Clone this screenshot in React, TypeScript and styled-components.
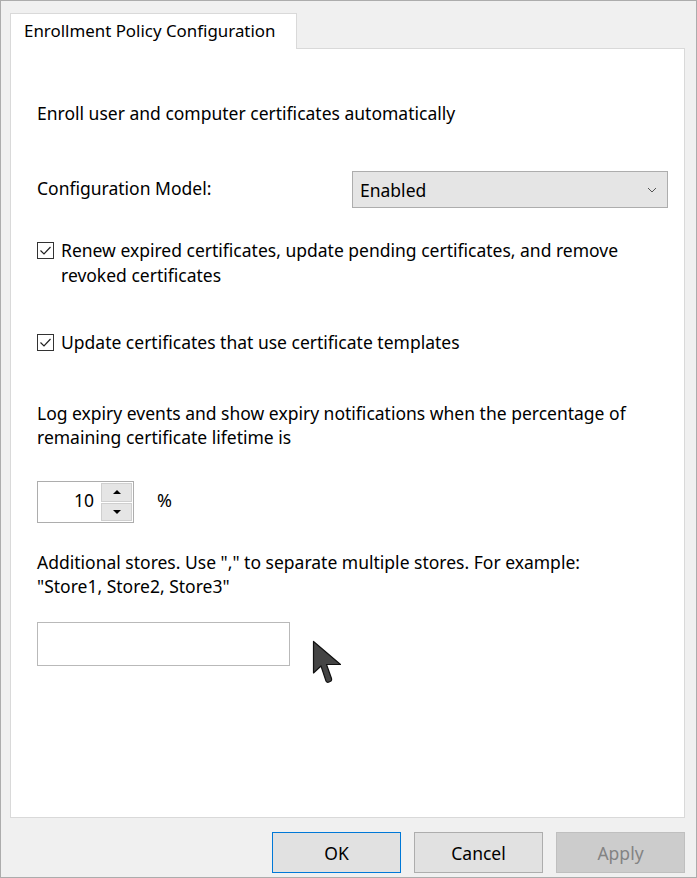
import React from "react";
import styled, { createGlobalStyle } from "styled-components";

const Global = createGlobalStyle`
  html, body { margin: 0; padding: 0; background: #f0f0f0; }
  body { font-family: "Segoe UI", "Noto Sans", "Open Sans", sans-serif; }
  * { box-sizing: border-box; }
`;

const Window = styled.div`
  position: relative;
  width: 697px;
  height: 878px;
  border: 1px solid #acacac;
  background: #f0f0f0;
  padding: 12px 11px 0 9px;
  display: flex;
  flex-direction: column;
  font-size: 17.5px;
  color: #000;
`;

const TabStrip = styled.div`
  display: flex;
  position: relative;
  z-index: 1;
  margin-bottom: -1px;
`;

const Tab = styled.div`
  width: 287px;
  height: 36px;
  background: #fff;
  border: 1px solid #d9d9d9;
  border-bottom: none;
  padding: 5px 0 0 13px;
  line-height: 24px;
  font-size: 16.9px;
  white-space: nowrap;
`;

const Panel = styled.div`
  width: 675px;
  height: 770px;
  background: #fff;
  border: 1px solid #d9d9d9;
  padding: 52px 0 0 26px;
  display: flex;
  flex-direction: column;
  align-items: flex-start;
`;

const Text = styled.div<{ $mt?: number; $lh?: number }>`
  margin-top: ${(p) => p.$mt ?? 0}px;
  line-height: ${(p) => p.$lh ?? 24}px;
  white-space: nowrap;
`;

const Row = styled.div<{ $mt: number }>`
  margin-top: ${(p) => p.$mt}px;
  display: flex;
  align-items: center;
  width: 100%;
`;

const Label = styled.div`
  width: 315px;
  line-height: 24px;
  margin-top: -4px;
`;

const Combo = styled.div`
  width: 316px;
  height: 37px;
  background: #e5e5e5;
  border: 1px solid #adadad;
  display: flex;
  align-items: center;
  justify-content: space-between;
  padding: 0 10px 0 7px;
`;

const CheckRow = styled.div<{ $mt: number }>`
  margin-top: ${(p) => p.$mt}px;
  display: flex;
  align-items: flex-start;
  gap: 7px;
`;

const Box = styled.div`
  width: 17px;
  height: 17px;
  margin-top: 4px;
  border: 1px solid #333;
  background: #fff;
  display: flex;
  align-items: center;
  justify-content: center;
  flex: none;
`;

const SpinRow = styled.div<{ $mt: number }>`
  margin-top: ${(p) => p.$mt}px;
  display: flex;
  align-items: center;
  gap: 23px;
`;

const Spinner = styled.div`
  width: 97px;
  height: 42px;
  border: 1px solid #adadad;
  display: flex;
  background: #fff;
`;

const SpinValue = styled.div`
  flex: 1;
  text-align: right;
  padding-right: 7px;
  line-height: 36px;
`;

const SpinButtons = styled.div`
  width: 32px;
  display: flex;
  flex-direction: column;
  gap: 1px;
  padding: 1px 1px 1px 0;
`;

const SpinButton = styled.div`
  flex: 1;
  background: #e5e5e5;
  border: 1px solid #cfcfcf;
  display: flex;
  align-items: center;
  justify-content: center;
`;

const Percent = styled.div`
  line-height: 24px;
  margin-top: -4px;
  font-size: 18px;
`;

const Input = styled.div<{ $mt: number }>`
  margin-top: ${(p) => p.$mt}px;
  width: 253px;
  height: 44px;
  border: 1px solid #b9b9b9;
  background: #fff;
`;

const Footer = styled.div`
  flex: 1;
  display: flex;
  justify-content: flex-end;
  align-items: flex-start;
  padding-top: 14px;
  gap: 13px;
`;

const Button = styled.div<{ $variant?: "default" | "disabled" }>`
  width: 129px;
  height: 41px;
  display: flex;
  align-items: center;
  justify-content: center;
  background: ${(p) => (p.$variant === "disabled" ? "#cccccc" : "#e1e1e1")};
  border: 1px solid
    ${(p) =>
      p.$variant === "default"
        ? "#0078d7"
        : p.$variant === "disabled"
        ? "#bfbfbf"
        : "#adadad"};
  color: ${(p) => (p.$variant === "disabled" ? "#838383" : "#000")};
`;

const Cursor = styled.svg`
  position: absolute;
  left: 311px;
  top: 639px;
`;

const Check = () => (
  <svg width="13" height="11" viewBox="0 0 13 11">
    <path d="M1.5 5.5 L5 9 L11.5 2" fill="none" stroke="#222" strokeWidth="1.2" />
  </svg>
);

export default function App() {
  return (
    <>
      <Global />
      <Window>
        <TabStrip>
          <Tab>Enrollment Policy Configuration</Tab>
        </TabStrip>
        <Panel>
          <Text>Enroll user and computer certificates automatically</Text>
          <Row $mt={46}>
            <Label>Configuration Model:</Label>
            <Combo>
              <span>Enabled</span>
              <svg width="10" height="6" viewBox="0 0 10 6">
                <path d="M1 1 L5 5 L9 1" fill="none" stroke="#555" strokeWidth="1" />
              </svg>
            </Combo>
          </Row>
          <CheckRow $mt={30}>
            <Box>
              <Check />
            </Box>
            <Text $lh={25}>
              Renew expired certificates, update pending certificates, and remove
              <br />
              revoked certificates
            </Text>
          </CheckRow>
          <CheckRow $mt={42}>
            <Box>
              <Check />
            </Box>
            <Text $lh={25}>Update certificates that use certificate templates</Text>
          </CheckRow>
          <Text $mt={46}>
            Log expiry events and show expiry notifications when the percentage of
            <br />
            remaining certificate lifetime is
          </Text>
          <SpinRow $mt={32}>
            <Spinner>
              <SpinValue>10</SpinValue>
              <SpinButtons>
                <SpinButton>
                  <svg width="8" height="4" viewBox="0 0 8 4">
                    <path d="M0 4 L4 0 L8 4 Z" fill="#000" />
                  </svg>
                </SpinButton>
                <SpinButton>
                  <svg width="8" height="4" viewBox="0 0 8 4">
                    <path d="M0 0 L4 4 L8 0 Z" fill="#000" />
                  </svg>
                </SpinButton>
              </SpinButtons>
            </Spinner>
            <Percent>%</Percent>
          </SpinRow>
          <Text $mt={27}>
            Additional stores. Use "," to separate multiple stores. For example:
            <br />
            "Store1, Store2, Store3"
          </Text>
          <Input $mt={24} />
        </Panel>
        <Footer>
          <Button $variant="default">OK</Button>
          <Button>Cancel</Button>
          <Button $variant="disabled">Apply</Button>
        </Footer>
        <Cursor width="32" height="48" viewBox="0 0 32 48">
          <path
            d="M1.5 1.5 L1.5 33 L9 26 L14 41 Q15 43 17 42 L19 41 Q20 40 19.5 38.5 L14.5 24.5 L28.5 24.5 Z"
            fill="#444"
            stroke="#111"
            strokeWidth="1.2"
            strokeLinejoin="round"
          />
        </Cursor>
      </Window>
    </>
  );
}
